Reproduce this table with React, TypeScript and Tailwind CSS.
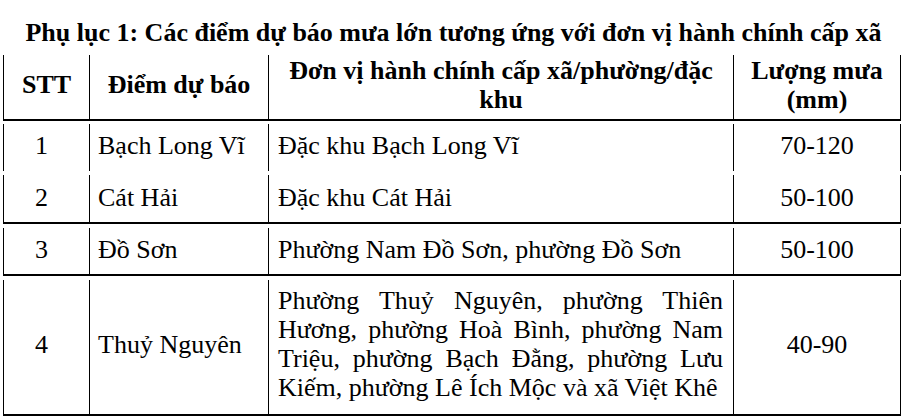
import React from "react";

const serif = { fontFamily: '"Liberation Serif", "Times New Roman", serif' };

function Cell({ children, className = "", last = false }: { children?: React.ReactNode; className?: string; last?: boolean }) {
  return (
    <div className={`border-l border-black flex items-center ${last ? "border-r" : ""} ${className}`}>
      {children}
    </div>
  );
}

const cols = "grid grid-cols-[86px_179px_465px_168px]";

export default function App() {
  return (
    <div className="w-[907px] h-[420px] bg-white text-black overflow-hidden" style={serif}>
      <div className="pt-[18px] text-center font-bold text-[26px] leading-[29px] whitespace-nowrap">
        Phụ lục 1: Các điểm dự báo mưa lớn tương ứng với đơn vị hành chính cấp xã
      </div>
      <div className="ml-[3px] w-[898px] text-[26px] leading-[29px]">
        {/* header */}
        <div className="border-b-2 border-black">
          <div className={`${cols} mt-[8px] h-[64px] font-bold`}>
            <Cell className="justify-center pb-[5px]">STT</Cell>
            <Cell className="justify-center pb-[5px]">Điểm dự báo</Cell>
            <Cell className="justify-center text-center pb-[5px]">
              <div>
                Đơn vị hành chính cấp xã/phường/đặc
                <br />
                khu
              </div>
            </Cell>
            <Cell last className="justify-center text-center pb-[5px]">
              <div>
                Lượng mưa
                <br />
                (mm)
              </div>
            </Cell>
          </div>
        </div>
        {/* row 1 */}
        <div>
          <div className={`${cols} mt-[3px] h-[47px]`}>
            <Cell className="justify-center pr-[10px] pb-[5px]">1</Cell>
            <Cell className="pl-[8px] pb-[5px]">Bạch Long Vĩ</Cell>
            <Cell className="pl-[9px] pb-[5px]">Đặc khu Bạch Long Vĩ</Cell>
            <Cell last className="justify-center pb-[5px]">70-120</Cell>
          </div>
        </div>
        {/* row 2 */}
        <div className="border-b-2 border-black">
          <div className={`${cols} mt-[4px] h-[47px]`}>
            <Cell className="justify-center pr-[10px] pb-[2px]">2</Cell>
            <Cell className="pl-[8px] pb-[2px]">Cát Hải</Cell>
            <Cell className="pl-[9px] pb-[2px]">Đặc khu Cát Hải</Cell>
            <Cell last className="justify-center pb-[2px]">50-100</Cell>
          </div>
        </div>
        {/* row 3 */}
        <div className="border-b-2 border-black">
          <div className={`${cols} mt-[4px] h-[46px]`}>
            <Cell className="justify-center pr-[10px] pb-[4px]">3</Cell>
            <Cell className="pl-[8px] pb-[4px]">Đồ Sơn</Cell>
            <Cell className="pl-[9px] pb-[4px]">Phường Nam Đồ Sơn, phường Đồ Sơn</Cell>
            <Cell last className="justify-center pb-[4px]">50-100</Cell>
          </div>
        </div>
        {/* row 4 */}
        <div className="border-b-2 border-black">
          <div className={`${cols} mt-[4px] h-[134px]`}>
            <Cell className="justify-center pr-[10px] pb-[6px]">4</Cell>
            <Cell className="pl-[8px] pb-[6px]">Thuỷ Nguyên</Cell>
            <Cell className="pl-[9px] pr-[10px] pb-[6px]">
              <div className="w-full">
                <div className="text-justify [text-align-last:justify]">Phường Thuỷ Nguyên, phường Thiên</div>
                <div className="text-justify [text-align-last:justify]">Hương, phường Hoà Bình, phường Nam</div>
                <div className="text-justify [text-align-last:justify]">Triệu, phường Bạch Đằng, phường Lưu</div>
                <div className="whitespace-nowrap">Kiếm, phường Lê Ích Mộc và xã Việt Khê</div>
              </div>
            </Cell>
            <Cell last className="justify-center pb-[6px]">40-90</Cell>
          </div>
        </div>
      </div>
    </div>
  );
}
